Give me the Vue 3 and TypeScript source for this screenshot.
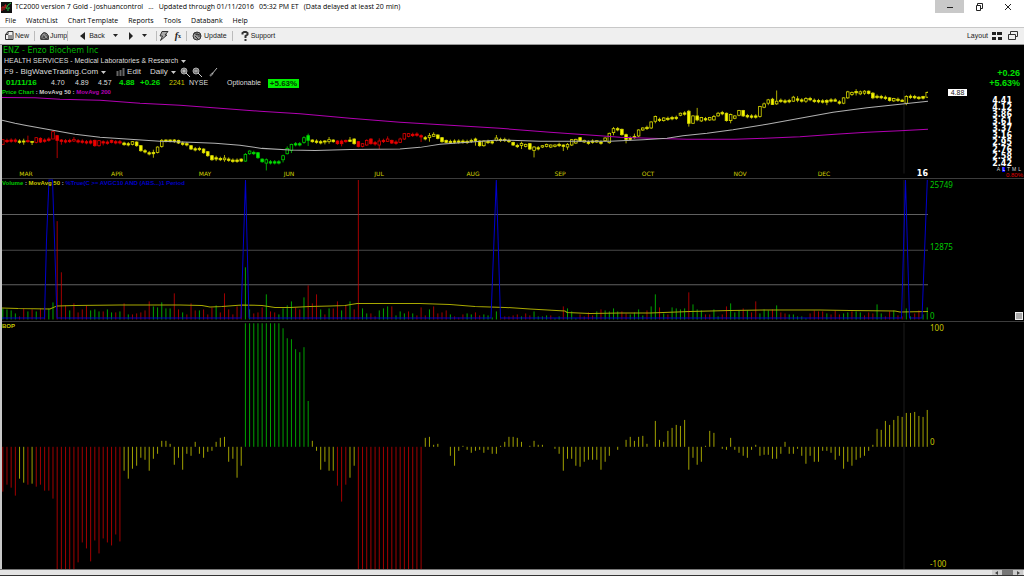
<script setup lang="ts">
type Tone = 'r' | 'g' | 'y'

interface Candle {
  x: number
  top: number
  height: number
  high: number
  low: number
  hollow: boolean
  tone: Tone
}

interface Bar {
  x: number
  value: number
  tone: Tone
}

const STEP = 4.183
const FIRST = 2.8
const barX = (i: number): number => FIRST + i * STEP

const toneRuns: [Tone, number][] = [
  ['r', 4], ['y', 2], ['r', 1], ['y', 1], ['r', 21], ['y', 29], ['g', 16], ['y', 6],
  ['r', 3], ['y', 2], ['r', 16], ['y', 121],
]
const tones: Tone[] = toneRuns.flatMap(([tone, count]) => Array<Tone>(count).fill(tone))

/* Ten per row. A bare number is a doji; f = filled body, h = hollow body, then top, bottom, high, low. */
const candleData = `h148-162-146-164 150 149 149 152 f152-155-145-163 f151-154-136-157 f153-156-153-164 h142-156 f144-155-141-158
149 146 h124-146-122-146 f136-150-134-203 f149-153-146-163 151 150 h147-152-140-155 151 152
154 f152-158-148-162 f150-166 h151-166 f154-158-150-165 155 f150-156 154 154 f158-163-154-166
160 h154-162 f155-166 f166-181 181 187 f186-190-178-202 h170-186 h150-168-146-172 f149-153
f149-153 f149-153-146-158 f150-158 158 160 f166-176 175 174 f176-187 f184-196
f196-208 f202-206-196-212 204 h203-208-194-214 206 209 209 f206-212 h192-212-188-214 h182-190
186 f187-202 f206-214 h208-218-204-240 214 214 214 h196-208-193-216 h174-190-168-192 h162-180-160-188
160 160 h142-156-138-160 f136-150-130-167 f149-154 152 154 f152-155-149-162 h148-154-140-160 f149-154
f152-160 f152-160-148-168 f150-154 f149-153-140-155 f146-160 f154-168 h160-168 h150-164-147-166 f146-160 f157-161-152-166
h152-164-144-176 150 h146-153-138-154 f150-158 155 h146-156-142-158 h130-146 h130-138 132 131
f136-140-132-155 142 h136-142-128-154 h132-138-126-139 f134-144 f142-154 f150-156 153 152 152
152 153 150 f146-152-142-166 f152-166 h152-166 153 154 h143-150-134-153 147
147 150 f156-164 165 h159-165-154-176 h162-168 f160-176 h170-180-167-201 172 h166-170
h162-168 h164-170 h164-168 162 f164-168-162-182 h162-170-158-178 h148-164 h147-158 f142-152 h150-155
155 152 h151-155 155 h143-151 h129-157 h115-127-110-135 115 f117-133 f133-147-130-159
143 f138-142-130-145 h119-137 h113-119 111 h95-113 h79-93-76-99 87 h83-91 84
82 81 h69-75 68 f63-99-59-109 h77-99-75-100 f77-89-53-93 h82-92 85 h82-89
h79-89-74-91 h69-77-65-79 67 f69-91 h73-91-70-99 h77-84 h61-75 f61-77 76 77
77 h49-79 h41-51-37-54 h29-39-26-45 f27-43-23-44 h33-41-1-44 30 32 31 h21-33-17-35
f26-30-18-36 29 h25-33-21-38 25 30 31 32 f31-36-27-45 29 f29-33-24-34
35 h23-39 h5-23-2-26 h7-13-4-17 f4-8--3-16 h5-11-1-15 h3-9-0-14 f3-10 f9-23-6-27 18
19 21 f23-31 h25-32 27 f30-34-26-35 h19-39-15-45 18 19 f21-25-18-29
f19-24-17-28 h7-21-4-23`.split(/\s+/)

const candles: Candle[] = candleData.map((token, i) => {
  const y = (v: number): number => 90 + v / 3
  const tone = tones[i]
  const x = barX(i)
  if (/^\d/.test(token)) {
    const m = Number(token)
    return { x, top: y(m), height: 1.3, high: y(m - 5), low: y(m + 8), hollow: false, tone }
  }
  const n = (token.slice(1).match(/(?:^|-)(-?\d+)/g) ?? []).map((part, k) => Number(k ? part.slice(1) : part))
  const [top, bottom, high = top - 2, low = bottom + 3] = n
  return { x, top: y(top), height: (bottom - top) / 3, high: y(high), low: y(low), hollow: token[0] === 'h', tone }
})

const volumeData = `g11 g10 g9 g6 r3 r11 g8 r10 g8 r11 r12 g11 g17 r98 r47 r14 g9 r16 r7 r10
r14 g9 g10 g8 r8 g10 g7 r7 g8 r16 g5 r5 r6 r7 r9 r18 g13 g12 g17 g11
g11 r26 r10 g7 r5 r16 r9 g9 r10 r5 r12 g14 r7 r26 r10 r5 r13 r14 g52 g10
r6 r7 r12 g25 r8 r7 g5 g11 g14 g18 r12 r10 g22 r34 r16 r25 g10 r5 g11 r11
r18 g9 r14 g18 r10 r139 g11 g6 r6 r3 g9 g11 g13 r13 g4 g8 g6 r8 g6 r4
r12 r4 g10 r13 r6 r7 r9 g5 r3 r2 r5 g6 g5 r7 r4 g5 g4 g2 g8 r1
r3 r3 r4 r5 g3 r6 r4 g8 g3 g3 g4 r4 g1 g3 r13 g11 g8 g1 r5 r3
r7 r4 g8 r10 g9 g8 g11 g8 r8 r6 g5 g7 g10 g4 r9 g13 g25 r12 g6 r5
g12 g11 g10 g11 r27 g15 g10 g9 r5 r5 g10 g3 r5 r13 g16 g7 g9 r11 g9 r7
r18 g6 g10 g9 r10 g14 r7 r6 g5 g5 g3 g3 g1 r6 r9 r8 r8 g6 r5 r9
r5 g6 g7 r8 g8 g7 r4 r7 r6 g15 g6 r3 r8 g9 r4 r3 g11 g3 r6 r9
g5 g12`.split(/\s+/)

const volumes: Bar[] = volumeData.map((token, i) => ({
  x: barX(i),
  value: Number(token.slice(1)),
  tone: token[0] as Tone,
}))

const bopData: number[] = [
  -45, -38, -41, -49, -32, -36, -38, -37, -40, -38, -44, -44, -52, -124, -124, -124, -124, -124, -116, -96,
  -102, -115, -94, -107, -92, -96, -99, -88, -95, -24, -32, -22, -19, -11, -13, -24, -12, -7, 6, 6,
  3, -18, -11, -23, -7, -9, 5, -7, -11, -5, -4, 5, 9, 10, -15, -12, -31, -19, 124, 124,
  124, 124, 124, 124, 124, 124, 124, 119, 109, 108, 98, 95, 100, 46, 6, -4, -23, -15, -24, -24,
  -39, -55, -38, -31, -19, -124, -124, -124, -124, -124, -124, -124, -124, -124, -124, -124, -124, -124, -124, -124,
  -124, 9, 10, 2, 3, 0, 0, -9, -19, -4, 1, -3, -6, -4, -3, -6, -3, -7, -7, 1,
  5, 10, 10, 9, 5, 0, 1, 6, 2, 2, 0, 0, -2, -7, -24, -12, -12, -19, -20, -15,
  -13, -13, -13, -23, -15, -9, 0, -3, 0, 7, 10, 6, 10, 11, 3, 0, 26, 7, 5, 16,
  19, 22, 21, 27, -23, -11, -18, -15, 1, 16, 14, 0, -2, -3, 9, -3, -6, -9, -11, -3,
  2, -9, -8, -8, -12, -12, -7, 5, -7, -7, -2, -9, -17, -9, -15, -15, -4, -4, -6, -13,
  -9, -22, -15, -19, -13, -11, -9, -4, 2, 18, 17, 26, 22, 27, 31, 30, 34, 34, 35, 31,
  30, 37,
]
const bop: Bar[] = bopData.map((value, i) => ({ x: barX(i), value, tone: tones[i] }))

const months = [
  { name: 'MAR', at: 26 }, { name: 'APR', at: 117 }, { name: 'MAY', at: 205 }, { name: 'JUN', at: 289 },
  { name: 'JUL', at: 379 }, { name: 'AUG', at: 473 }, { name: 'SEP', at: 560 }, { name: 'OCT', at: 648 },
  { name: 'NOV', at: 740 }, { name: 'DEC', at: 824 },
].map((m) => ({ name: m.name, left: `${((m.at - 2) / 926) * 100}%` }))

const prices = ['4.41', '4.12', '3.86', '3.61', '3.37', '3.16', '2.95', '2.76', '2.58', '2.42']
const menus = ['File', 'WatchList', 'Chart Template', 'Reports', 'Tools', 'Databank', 'Help']
</script>

<template>
  <div class="window">
    <header class="titlebar">
      <svg class="logo" viewBox="0 0 11 11" aria-hidden="true">
        <rect width="11" height="11" fill="#101010" />
        <path d="M1 9V5h2v3M4 6V3h1v3" stroke="#d02020" fill="none" />
        <path d="M5 7l2-4 3-2M7 9V6h2" stroke="#20c040" fill="none" />
      </svg>
      <h1 class="caption">
        <span>TC2000 version 7 Gold - joshuancontrol</span>
        <span>...</span>
        <span>Updated through 01/11/2016</span>
        <span>05:32 PM ET</span>
        <span>(Data delayed at least 20 min)</span>
      </h1>
      <div class="controls">
        <button type="button" class="active" aria-label="Minimize">
          <svg viewBox="0 0 10 10"><path d="M2 5.5h6" /></svg>
        </button>
        <button type="button" aria-label="Restore">
          <svg viewBox="0 0 10 10"><path d="M2.5 3.5h4v5h-4zM3.5 3.5v-2h5v5h-2" /></svg>
        </button>
        <button type="button" aria-label="Close">
          <svg viewBox="0 0 10 10"><path d="M2 2l6 6M8 2l-6 6" /></svg>
        </button>
      </div>
    </header>

    <nav class="menubar">
      <button v-for="m in menus" :key="m" type="button">{{ m }}</button>
    </nav>

    <div class="toolbar">
      <button type="button">
        <svg viewBox="0 0 10 10"><path d="M3 .5h5v8H.5v-5zM3 .5v3H.5M3 5h4M3 7h4" /></svg>New
      </button>
      <i class="sep"></i>
      <button type="button">
        <svg viewBox="0 0 12 10">
          <path d="M1 9V5l2-3 2-1 3 1 2 3v4z" fill="#999" />
          <path d="M1 9V5l2-3 2-1 3 1 2 3v4zM3 5h2v2M6 3l3 3M2 8l3-2 2 3 3-3" />
        </svg>Jump
      </button>
      <i class="sep open"></i>
      <button type="button" class="back">
        <svg class="tri" viewBox="0 0 6 8"><path class="solid" d="M5 0v8L0 4z" /></svg>Back
      </button>
      <button type="button" class="drop" aria-label="Back history"><svg viewBox="0 0 6 4"><path class="solid" d="M0 0h5L2.5 3z" /></svg></button>
      <button type="button" class="fwd" aria-label="Forward"><svg class="tri" viewBox="0 0 6 8"><path class="solid" d="M1 0v8l4-4z" /></svg></button>
      <button type="button" class="drop" aria-label="Forward history"><svg viewBox="0 0 6 4"><path class="solid" d="M0 0h5L2.5 3z" /></svg></button>
      <i class="sep late"></i>
      <button type="button" aria-label="Alerts">
        <svg viewBox="0 0 10 10"><path d="M3 .5h6L6 4h2L1.5 9.5 3.5 5H1z" fill="#aaa" /></svg>
      </button>
      <button type="button" class="fx" aria-label="Formula"><em>f</em><small>x</small></button>
      <i class="sep"></i>
      <button type="button" class="update">
        <svg viewBox="0 0 10 10">
          <circle cx="5" cy="5" r="4" fill="#999" />
          <path d="M2 2l3 2 3-1M3 5l3 3M6 5h3M5 1v3" />
        </svg>Update
      </button>
      <i class="sep"></i>
      <button type="button" class="support">
        <svg viewBox="0 0 8 10"><path d="M1.5 3.5V2L3 1h2l1.5 1v1.5L4.5 5v2" stroke-width="2" /><path d="M4.5 8v2" stroke-width="2" /></svg>Support
      </button>
      <button type="button" class="layout">
        Layout
        <svg viewBox="0 0 10 10"><path class="solid" d="M0 1h4v3H0zM5 1h5v3H5zM0 6h4v3H0zM6 6h4v3H6z" /></svg>
      </button>
      <button type="button" class="float" aria-label="Float window">
        <svg viewBox="0 0 10 10"><path d="M.5 3.5h7v5h-7zM2.5 3.5v-3h7v5h-2" /></svg>
      </button>
    </div>

    <main class="charts">
      <section class="panel price">
        <div class="plot">
          <svg class="graph" viewBox="2 45 926 133" preserveAspectRatio="none" role="img" aria-label="Daily price chart">
            <path class="year" d="M904 90V173" />
            <g v-for="(c, i) in candles" :key="i" :class="['candle', c.tone]">
              <path :d="`M${c.x} ${c.high}V${c.low}`" />
              <rect :class="{ hollow: c.hollow }" :x="c.x - 1.3" :y="c.top" width="2.6" :height="c.height" />
            </g>
            <polyline class="ma200" points="2,97.3 35,97.5 60,99 100,100 140,103 180,105 220,108 260,111 300,113.5 350,118 400,122 450,125 500,128 550,132 600,135.5 620,137 650,138 687,139 735,139 765,138 800,136.5 835,134 867,132 900,130.5 928,129" />
            <polyline class="ma50" points="2,120 15,123 25,125 50,129.5 75,134 100,137 130,139 160,141 190,142 215,143 240,145 262,148 290,149.5 315,150 350,149 400,148.5 420,147 440,144 475,141.5 495,140 510,140 540,141 610,141 643,139.5 667,138 683,135.5 707,133 733,129.5 767,124 800,118 833,112 867,107.5 900,104 928,101" />
          </svg>
          <ol class="months">
            <li v-for="m in months" :key="m.name" :style="{ left: m.left }">{{ m.name }}</li>
          </ol>
          <b class="yearmark">16</b>
          <div class="info">
            <h2>ENZ - Enzo Biochem Inc</h2>
            <button type="button" class="industry">
              HEALTH SERVICES - Medical Laboratories &amp; Research
              <svg class="caret" viewBox="0 0 5 3"><path d="M0 0h5L2.5 3z" /></svg>
            </button>
            <div class="template">
              <button type="button">F9 - BigWaveTrading.Com <svg class="caret" viewBox="0 0 5 3"><path d="M0 0h5L2.5 3z" /></svg></button>
              <button type="button" class="edit"><svg viewBox="0 0 9 8"><path d="M1.5 8V3M4.5 8V2M7.5 8V0" stroke="#666" stroke-width="2" /></svg>Edit</button>
              <button type="button" class="period">Daily <svg class="caret" viewBox="0 0 5 3"><path d="M0 0h5L2.5 3z" /></svg></button>
              <button type="button" class="tool" aria-label="Zoom in"><svg viewBox="0 0 10 10"><circle cx="4" cy="4" r="3" fill="#777" stroke="#aaa" /><path d="M6 6l4 4M2.5 4h3M4 2.5v3" stroke="#ccc" /></svg></button>
              <button type="button" class="tool" aria-label="Zoom out"><svg viewBox="0 0 10 10"><circle cx="4" cy="4" r="3" fill="#777" stroke="#aaa" /><path d="M6 6l4 4M2.5 4h3" stroke="#ccc" /></svg></button>
              <button type="button" class="tool pen" aria-label="Draw line"><svg viewBox="0 0 10 10"><path d="M1 9l3-3" stroke="#777" stroke-width="2" /><path d="M3 7l5-6" stroke="#bbb" /></svg></button>
            </div>
            <div class="quote">
              <b>01/11/16</b><span>4.70</span><span>4.89</span><span>4.57</span><b>4.88</b><b>+0.26</b>
              <span class="vol">2241</span><span>NYSE</span><span>Optionable</span><b class="chip">+5.63%</b>
            </div>
            <div class="legend">
              <span class="lg">Price Chart</span> : <span>MovAvg 50</span> : <span class="lm">MovAvg 200</span>
            </div>
          </div>
        </div>
        <div class="axis">
          <div class="change"><b>+0.26</b><b>+5.63%</b></div>
          <span class="last">4.88</span>
          <ol class="scale"><li v-for="p in prices" :key="p">{{ p }}</li></ol>
          <div class="modes"><span>A</span><span class="on">L</span><span>T</span><span>M</span><span>L</span></div>
          <span class="pct">0.80%</span>
        </div>
      </section>

      <section class="panel volume">
        <div class="plot">
          <svg class="graph" viewBox="2 179 926 141" preserveAspectRatio="none" role="img" aria-label="Volume chart">
            <path class="year" d="M904 180V319" />
            <path class="grid" d="M2 214.5H928M2 284.5H928" />
            <path class="grid mid" d="M2 250H928" />
            <path v-for="(v, i) in volumes" :key="i" :class="['bar', v.tone]" :d="`M${v.x} 319V${319 - v.value}`" />
            <polyline class="vma" points="2,307.5 18,308.2 50,308.5 57,305.5 75,305 120,304.5 180,304.5 202,305 210,306.5 222,306 242,304.5 262,305 275,307 290,307 310,306 330,305.5 345,305 357,303 420,303 450,304 475,306 505,307 530,308.5 565,310.5 567,312 590,313 620,312.5 650,312.5 690,311 730,310 765,309.5 820,309.5 850,310 895,310.5 900,311.5 928,311" />
            <polyline class="signal" points="2,317.5 44.5,317.5 46.5,240 49,180 52.5,180 54.5,240 57,317.5 241,317.5 245.5,180 249,317.5 491,317.5 496.3,180 500.5,317.5 901.5,317.5 905.5,180 909.5,317.5 922,317.5 927.3,180" />
          </svg>
          <div class="legend">
            <span class="lg">Volume</span> : <span class="ly">MovAvg 50</span> : <span class="lb">%True(C &gt;= AVGC10 AND (ABS...)1 Period</span>
          </div>
        </div>
        <div class="axis values green">
          <span>25749</span><span class="middle">12875</span><span>0</span>
          <button type="button" class="knob" aria-label="Resize panel"></button>
        </div>
      </section>

      <section class="panel bop">
        <div class="plot">
          <svg class="graph" viewBox="2 321 926 248" preserveAspectRatio="none" role="img" aria-label="Balance of power chart">
            <path class="year" d="M904 322V569" />
            <path v-for="(b, i) in bop" :key="i" :class="['bar', b.tone]" :d="`M${b.x} 446.3V${446.3 - b.value}`" />
          </svg>
          <div class="legend"><span class="ly">BOP</span></div>
        </div>
        <div class="axis values yellow"><span>100</span><span class="middle">0</span><span>-100</span></div>
      </section>
    </main>

    <footer class="scroller">
      <button type="button" aria-label="Scroll left"><svg viewBox="0 0 8 4"><path d="M5 0v4L2 2z" /></svg></button>
      <i class="thumb"></i>
      <button type="button" aria-label="Scroll right"><svg viewBox="0 0 8 4"><path d="M3 0v4l3-2z" /></svg></button>
    </footer>
  </div>
</template>

<style>
html, body { margin: 0; background: #000; }
</style>

<style scoped>
* { box-sizing: border-box; margin: 0; padding: 0; }
button { background: none; border: 0; color: inherit; font: inherit; display: flex; align-items: center; white-space: nowrap; }
ol { list-style: none; }
svg { display: block; flex: none; }

.window { display: flex; flex-direction: column; min-height: 100vh; background: #000; font-family: "Liberation Sans", Arial, sans-serif; font-size: 8px; line-height: 10px; color: #ddd; }

.titlebar { display: flex; height: 14px; background: #fff; color: #000; align-items: center; }
.logo { width: 11px; height: 11px; margin-left: 1px; }
.caption { display: flex; gap: 5px; margin-left: 3px; font: 400 7px/14px "Open Sans", sans-serif; white-space: nowrap; }
.controls { display: flex; margin: 0 2px 0 auto; align-self: stretch; }
.controls button { width: 29px; height: 13px; justify-content: center; }
.controls button.active { background: #c9c9c9; }
.controls svg { width: 10px; height: 10px; fill: none; stroke: #222; stroke-width: 1; }

.menubar { display: flex; gap: 10px; height: 13px; padding-left: 5px; background: #fff; color: #000; font: 7px/13px "Open Sans", sans-serif; }

.toolbar { display: flex; align-items: center; height: 18px; background: #efefef; border-top: 1px solid #c8c8c8; border-bottom: 1px solid #999; padding: 0 6px 0 5px; color: #222; font-size: 7px; }
.toolbar svg { width: 10px; height: 10px; fill: none; stroke: #333; stroke-width: 1; }
.toolbar .solid { fill: #222; stroke: none; }
.sep { width: 1px; height: 10px; background: #bbb; margin: 0 5px; }
.sep.open { margin: 0 12px 0 0; }
.sep.late { margin: 0 2px 0 8px; }
.toolbar .tri { width: 6px; height: 8px; }
.toolbar .back { gap: 3px; }
.toolbar .drop { margin-left: 8px; }
.toolbar .drop svg { width: 6px; height: 4px; }
.toolbar .fwd { margin-left: 9px; }
.toolbar .fx { margin-left: 6px; font: bold 10px/10px "Liberation Serif", serif; }
.fx small { font-size: 6px; }
.toolbar .update { gap: 2px; }
.toolbar .support { gap: 2px; margin-left: 3px; }
.toolbar .support svg { width: 8px; }
.toolbar .layout { margin-left: auto; gap: 4px; }
.toolbar .float { margin-left: 6px; }

.charts { display: flex; flex-direction: column; flex: 1; border-left: 2px solid #c8c8c8; }
.panel { display: flex; min-height: 120px; }
.price { flex: 134 1 0; border-bottom: 1px solid #3c3c3c; }
.volume { flex: 142 1 0; border-bottom: 1px solid #3c3c3c; }
.bop { flex: 248 1 0; }
.plot { position: relative; flex: 1; min-width: 0; }
.graph { position: absolute; inset: 0; width: 100%; height: 100%; overflow: hidden; }
.axis { position: relative; flex: none; width: 96px; }

.year { stroke: #0e0e0e; stroke-width: 2; }
.ma200 { fill: none; stroke: #b000b0; stroke-width: 1; }
.ma50 { fill: none; stroke: #b0b0b0; stroke-width: 1; }
.candle path { stroke-width: .8; }
.candle rect { stroke-width: .8; }
.candle.r { stroke: #e00000; fill: #f00000; }
.candle.g { stroke: #00d000; fill: #00f000; }
.candle.y { stroke: #d8d800; fill: #f8f800; }
.candle .hollow { fill: #000; }
.bar { fill: none; stroke-width: .75; }
.bar.r { stroke: #d80000; }
.bar.g { stroke: #00d800; }
.bar.y { stroke: #d8d800; }
.grid { stroke: #606060; }
.grid.mid { stroke: #484848; }
.vma { fill: none; stroke: #a8a800; }
.signal { fill: none; stroke: #0000cc; }

.months { position: absolute; left: 0; right: 0; bottom: 0; height: 9px; }
.months li { position: absolute; width: 30px; margin-left: -15px; text-align: center; color: #d0d000; font: 6px/9px "DejaVu Sans", sans-serif; }
.yearmark { position: absolute; right: 0; bottom: 0; color: #fff; font: bold 8px/9px "DejaVu Sans", sans-serif; }

.info { position: relative; padding: 1px 0 0 1px; }
.info h2 { font: 400 8px/10px "DejaVu Sans", sans-serif; color: #00b400; }
.caret { width: 5px; height: 3px; fill: #ccc; margin-left: 3px; }
.industry { font-size: 7px; line-height: 10px; padding-left: 1px; }
.template { display: flex; align-items: center; height: 12px; padding-left: 1px; }
.edit { margin-left: 10px; }
.edit svg { width: 9px; height: 8px; margin-right: 2px; }
.period { margin-left: 9px; }
.tool { margin-left: 2px; }
.tool svg { width: 10px; height: 10px; fill: none; }
.period + .tool { margin-left: 4px; }
.pen { margin-left: 7px; }
.quote { display: grid; grid-template-columns: 45px 24px 23px 21px 21px 29px 20px 38px 41px 31px; height: 10px; align-items: center; padding-left: 3px; font-size: 7px; color: #ddd; }
.quote b { color: #00e000; font-size: 8px; }
.quote .vol { color: #c8c800; }
.quote .chip { background: #00f000; color: #003c00; line-height: 9px; text-align: center; }
.legend { position: relative; color: #ccc; font: bold 6px/9px "Liberation Sans", sans-serif; white-space: pre; }
.info .legend { margin-left: -1px; }
.lg { color: #00c800; }
.lm { color: #b400b4; }
.ly { color: #c8c800; }
.lb { color: #0000c8; }

.price .axis { display: flex; flex-direction: column; }
.change { display: flex; flex-direction: column; align-items: flex-end; padding: 23px 4px 0 0; font-size: 9px; color: #00e000; }
.last { align-self: flex-start; margin: 1px 0 0 20px; width: 19px; background: #fff; color: #222; font-size: 7px; line-height: 7px; text-align: center; }
.scale { padding: 1px 12px 0 0; text-align: right; color: #fff; font: bold 8px/7px "DejaVu Sans", sans-serif; }
.modes { display: flex; gap: 2px; justify-content: flex-end; padding-right: 3px; font-size: 5px; line-height: 5px; }
.modes .on { background: #00f; color: #fff; }
.pct { text-align: right; padding-right: 1px; color: #e00000; font-size: 6px; line-height: 6px; }

.values { display: flex; flex-direction: column; justify-content: space-between; align-items: flex-start; padding-left: 2px; font: 8px/11px "Noto Sans", sans-serif; }
.values .middle { padding-bottom: 7px; }
.green { color: #00c800; }
.yellow { color: #c8c800; }
.knob { position: absolute; right: 1px; bottom: 1px; width: 8px; height: 8px; background: #aaa; border: 1px solid #eee; }

.scroller { display: flex; justify-content: flex-end; height: 7px; background: #e4e4e4; border-top: 1px solid #777; border-bottom: 1px solid #333; padding-right: 1px; }
.scroller button { width: 10px; background: #ccc; justify-content: center; }
.scroller svg { width: 8px; height: 4px; fill: #444; }
.thumb { width: 11px; background: #777; }
</style>
